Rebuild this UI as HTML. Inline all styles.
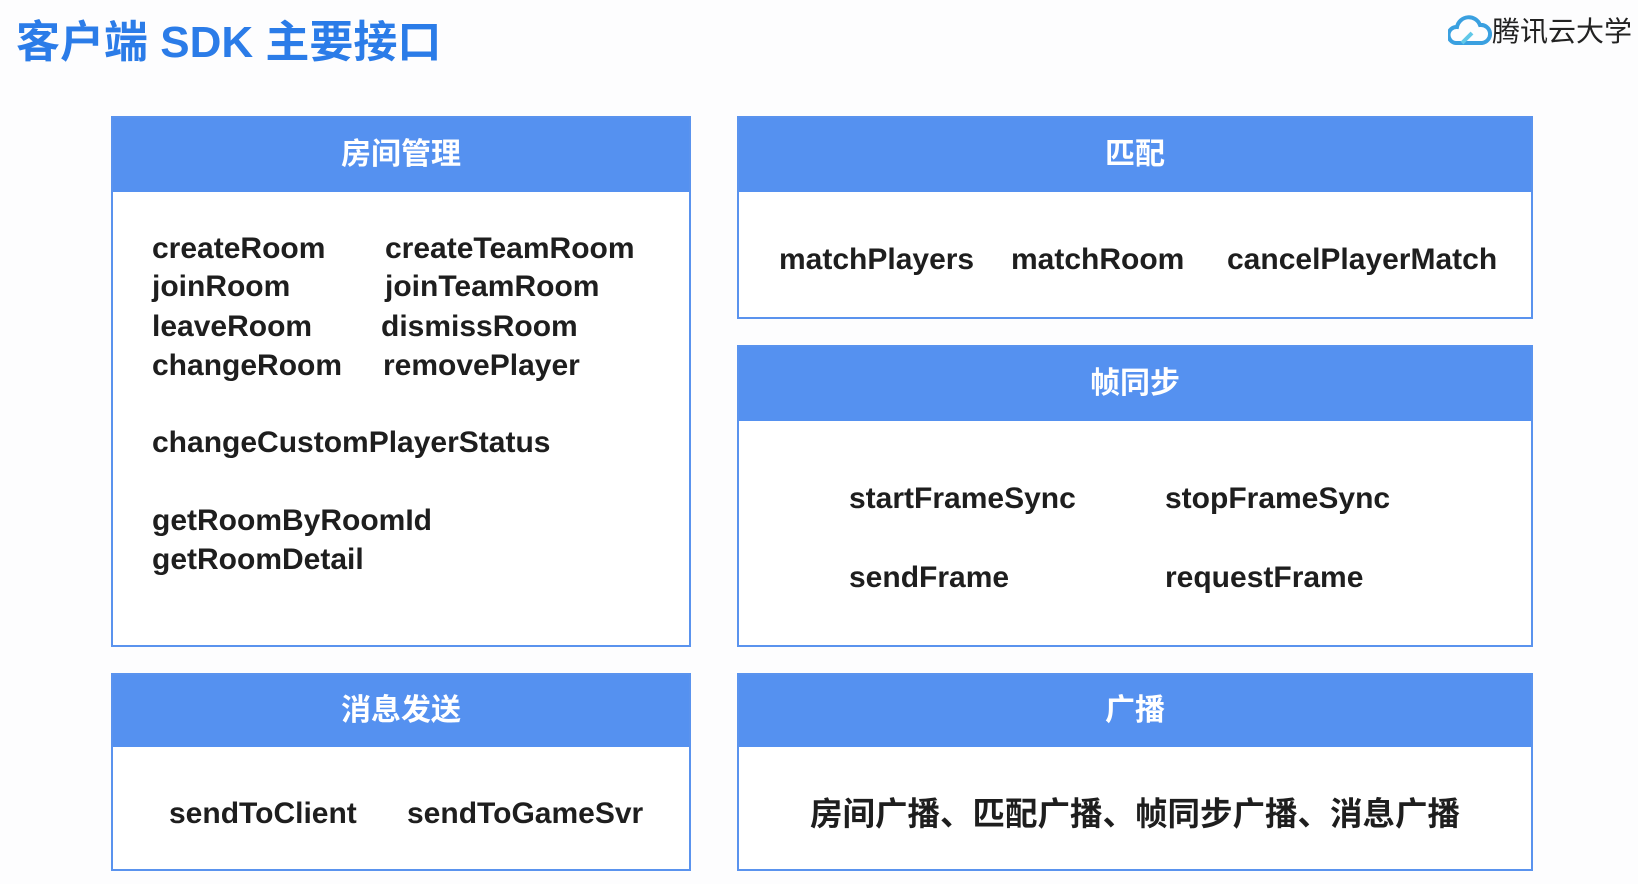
<!DOCTYPE html>
<html><head><meta charset="utf-8"><style>
html,body{margin:0;padding:0;background:#fdfdfe;}
body{width:1638px;height:884px;position:relative;overflow:hidden;font-family:"Liberation Sans","Noto Sans CJK SC",sans-serif;}
.title{position:absolute;left:16px;top:6px;font-size:44px;font-weight:bold;color:#2b7ce8;}
.logo{position:absolute;left:1448px;top:10px;display:flex;align-items:center;font-size:28px;color:#222;}
.box{position:absolute;border:2px solid #5a93ee;background:#fff;box-sizing:border-box;}
.hd{background:#5591f0;color:#fff;font-size:30px;text-align:center;font-weight:bold;position:absolute;left:0;right:0;top:0;}
.t{position:absolute;font-size:30px;color:#1e1e1e;white-space:nowrap;line-height:1;transform:translateY(-50%);font-weight:bold;}
</style></head><body>
<div class="title">客户端 SDK 主要接口</div>
<div class="logo"><svg width="44" height="34" viewBox="0 0 44 34"><path d="M8 30 A8 8 0 0 1 9 14 A12 12 0 0 1 32 12 A9 9 0 0 1 34 30 Z" fill="none" stroke="#3aa0e0" stroke-width="4"/><path d="M14 30 L24 20" stroke="#60c8e8" stroke-width="4"/></svg><span>腾讯云大学</span></div>

<div class="box" style="left:111px;top:116px;width:580px;height:531px;">
<div class="hd" style="height:74px;line-height:74px;">房间管理</div>
<div class="t" style="left:39px;top:131px">createRoom</div>
<div class="t" style="left:272px;top:131px">createTeamRoom</div>
<div class="t" style="left:39px;top:169px">joinRoom</div>
<div class="t" style="left:272px;top:169px">joinTeamRoom</div>
<div class="t" style="left:39px;top:209px">leaveRoom</div>
<div class="t" style="left:268px;top:209px">dismissRoom</div>
<div class="t" style="left:39px;top:248px">changeRoom</div>
<div class="t" style="left:270px;top:248px">removePlayer</div>
<div class="t" style="left:39px;top:325px">changeCustomPlayerStatus</div>
<div class="t" style="left:39px;top:403px">getRoomByRoomId</div>
<div class="t" style="left:39px;top:442px">getRoomDetail</div>
</div>

<div class="box" style="left:737px;top:116px;width:796px;height:203px;">
<div class="hd" style="height:74px;line-height:74px;">匹配</div>
<div class="t" style="left:40px;top:142px">matchPlayers</div>
<div class="t" style="left:272px;top:142px">matchRoom</div>
<div class="t" style="left:488px;top:142px">cancelPlayerMatch</div>
</div>

<div class="box" style="left:737px;top:345px;width:796px;height:302px;">
<div class="hd" style="height:74px;line-height:74px;">帧同步</div>
<div class="t" style="left:110px;top:152px">startFrameSync</div>
<div class="t" style="left:426px;top:152px">stopFrameSync</div>
<div class="t" style="left:110px;top:231px">sendFrame</div>
<div class="t" style="left:426px;top:231px">requestFrame</div>
</div>

<div class="box" style="left:111px;top:673px;width:580px;height:198px;">
<div class="hd" style="height:72px;line-height:72px;">消息发送</div>
<div class="t" style="left:56px;top:139px">sendToClient</div>
<div class="t" style="left:294px;top:139px">sendToGameSvr</div>
</div>

<div class="box" style="left:737px;top:673px;width:796px;height:198px;">
<div class="hd" style="height:72px;line-height:72px;">广播</div>
<div class="t" style="left:0;right:0;text-align:center;top:139px;font-size:32.5px;font-weight:bold;">房间广播、匹配广播、帧同步广播、消息广播</div>
</div>
</body></html>
